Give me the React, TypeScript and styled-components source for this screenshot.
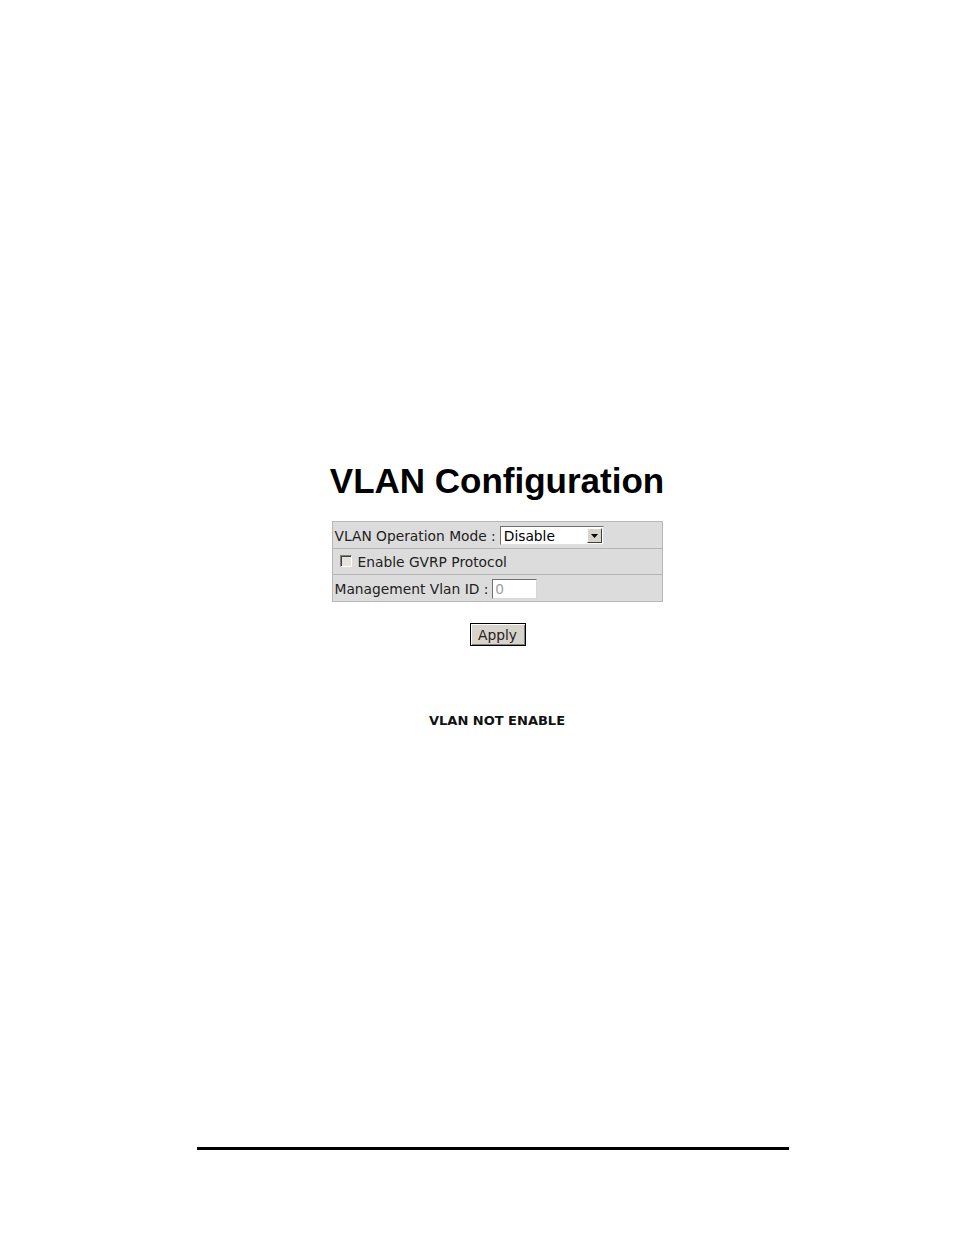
import React from "react";
import styled, { createGlobalStyle } from "styled-components";

const Global = createGlobalStyle`
  html, body { margin: 0; padding: 0; background: #fff; }
  body { width: 954px; height: 1235px; overflow: hidden; }
`;

const Page = styled.div`
  width: 954px;
  height: 1235px;
  display: flex;
  flex-direction: column;
  align-items: center;
  box-sizing: border-box;
  padding-top: 460px;
  padding-left: 40px;
`;

const Title = styled.h1`
  margin: 0;
  font-family: "Liberation Sans", Arial, sans-serif;
  font-weight: bold;
  font-size: 35px;
  line-height: 42px;
  color: #000;
`;

const Table = styled.div`
  margin-top: 19px;
  width: 331px;
  box-sizing: border-box;
  border: 1px solid #b8b8b8;
  background: #dcdcdc;
  display: flex;
  flex-direction: column;
  font-family: "DejaVu Sans", Verdana, sans-serif;
  font-size: 13.8px;
  color: #222;
`;

const Row = styled.div<{ $h: number }>`
  height: ${(p) => p.$h}px;
  display: flex;
  align-items: center;
  padding-left: 2px;
  padding-top: 1px;
  & + & { border-top: 1px solid #b4b4b4; }
  box-sizing: border-box;
  white-space: pre;
`;

const Select = styled.div`
  margin-left: 4px;
  width: 104px;
  height: 19px;
  box-sizing: border-box;
  background: #fff;
  border-top: 1px solid #707070;
  border-left: 1px solid #707070;
  border-right: 1px solid #e0e0e0;
  border-bottom: 1px solid #e0e0e0;
  display: flex;
  align-items: center;
  justify-content: space-between;
  padding-left: 3px;
  padding-right: 1px;
  color: #000;
`;

const Arrow = styled.div`
  width: 15px;
  height: 15px;
  box-sizing: border-box;
  background: #d8d4cc;
  border-top: 1px solid #fff;
  border-left: 1px solid #fff;
  border-right: 1px solid #404040;
  border-bottom: 1px solid #404040;
  display: flex;
  align-items: center;
  justify-content: center;
`;

const Check = styled.span`
  display: inline-block;
  width: 12px;
  height: 12px;
  box-sizing: border-box;
  margin-left: 5px;
  margin-right: 6px;
  margin-top: -3px;
  background: #e6e3dc;
  border-top: 1px solid #808080;
  border-left: 1px solid #808080;
  border-right: 1px solid #fff;
  border-bottom: 1px solid #fff;
  box-shadow: inset 1px 1px 0 #404040;
`;

const Input = styled.div`
  margin-left: 4px;
  width: 45px;
  height: 20px;
  box-sizing: border-box;
  background: #fff;
  border-top: 1px solid #707070;
  border-left: 1px solid #707070;
  border-right: 1px solid #d8d8d8;
  border-bottom: 1px solid #d8d8d8;
  color: #a0a0a0;
  padding-left: 2px;
  display: flex;
  align-items: center;
`;

const Button = styled.button`
  margin-top: 21px;
  width: 56px;
  height: 23px;
  padding: 0;
  background: #d8d4cc;
  border: 1px solid #000;
  box-shadow: inset 1px 1px 0 #fff, inset -1px -1px 0 #808080;
  font-family: "DejaVu Sans", Verdana, sans-serif;
  font-size: 13.8px;
  color: #222;
  margin-left: 1px;
`;

const Status = styled.div`
  margin-top: 67px;
  font-family: "DejaVu Sans", Verdana, sans-serif;
  font-weight: bold;
  font-size: 13px;
  color: #111;
`;

const Spacer = styled.div`
  flex: 1;
`;

const Rule = styled.div`
  width: 592px;
  height: 3px;
  background: #000;
  margin-bottom: 85px;
  margin-left: -9px;
`;

export default function App() {
  return (
    <>
      <Global />
      <Page>
        <Title>VLAN Configuration</Title>
        <Table>
          <Row $h={26}>
            VLAN Operation Mode :
            <Select>
              <span>Disable</span>
              <Arrow>
                <svg width="7" height="4" viewBox="0 0 7 4">
                  <polygon points="0,0 7,0 3.5,4" fill="#000" />
                </svg>
              </Arrow>
            </Select>
          </Row>
          <Row $h={26}>
            <Check />
            Enable GVRP Protocol
          </Row>
          <Row $h={27}>
            Management Vlan ID :<Input>0</Input>
          </Row>
        </Table>
        <Button>Apply</Button>
        <Status>VLAN NOT ENABLE</Status>
        <Spacer />
        <Rule />
      </Page>
    </>
  );
}
